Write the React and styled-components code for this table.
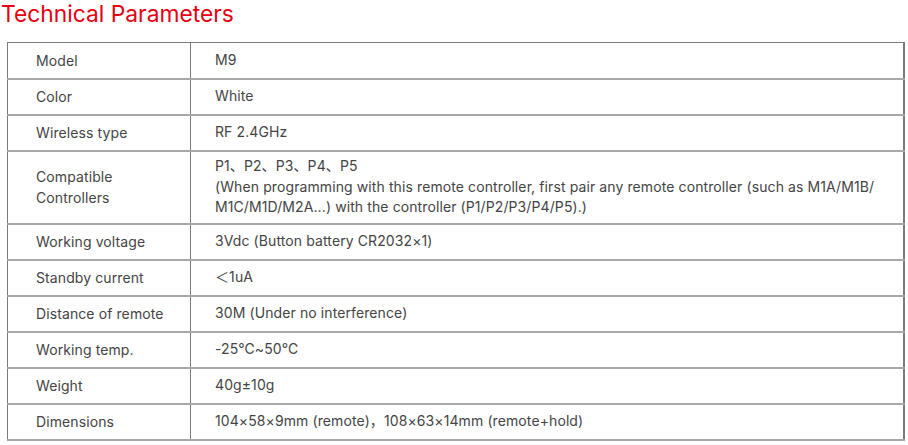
import React from 'react';
import styled, { createGlobalStyle } from 'styled-components';

const GlobalStyle = createGlobalStyle`
  html, body {
    margin: 0;
    padding: 0;
    background: #ffffff;
  }
  body {
    font-family: Inter, 'Noto Sans', 'Noto Sans CJK SC', sans-serif;
  }
`;

const params = [
  { label: 'Model', value: ['M9'] },
  { label: 'Color', value: ['White'] },
  { label: 'Wireless type', value: ['RF 2.4GHz'] },
  {
    label: 'Compatible\nControllers',
    value: [
      'P1、P2、P3、P4、P5',
      '(When programming with this remote controller, first pair any remote controller (such as M1A/M1B/',
      'M1C/M1D/M2A...) with the controller (P1/P2/P3/P4/P5).)',
    ],
  },
  { label: 'Working voltage', value: ['3Vdc (Button battery CR2032×1)'] },
  { label: 'Standby current', value: ['＜1uA'] },
  { label: 'Distance of remote', value: ['30M (Under no interference)'] },
  { label: 'Working temp.', value: ['-25℃~50℃'] },
  { label: 'Weight', value: ['40g±10g'] },
  { label: 'Dimensions', value: ['104×58×9mm (remote)，108×63×14mm (remote+hold)'] },
];

const Page = styled.div`
  width: 908px;
  height: 445px;
  overflow: hidden;
`;

const Title = styled.h2`
  margin: 0;
  padding: 1px 0 0 1px;
  height: 41px;
  font-size: 22.8px;
  font-weight: 400;
  line-height: 25px;
  color: #e60012;
`;

const Table = styled.table`
  margin-left: 7px;
  width: 898px;
  border-collapse: collapse;
  border: 1px solid #7a7a7a;
  border-right-width: 2px;
  table-layout: fixed;
`;

const Row = styled.tr`
  border-bottom: 2px solid #a8a8a8;
`;

const LabelCell = styled.td`
  width: 183px;
  height: ${p => (p.$tall ? 73 : 36)}px;
  padding: 0 0 0 28px;
  box-sizing: border-box;
  border-right: 1px solid #7a7a7a;
  font-size: 14px;
  line-height: 21px;
  letter-spacing: 0.1px;
  color: #444;
  white-space: pre-line;
  vertical-align: middle;
`;

const ValueCell = styled.td`
  padding: 0 0 0 24px;
  font-size: 14px;
  line-height: 20.5px;
  letter-spacing: 0.1px;
  color: #444;
  vertical-align: middle;
`;

const Line = styled.div`
  white-space: nowrap;
`;

export default function App() {
  return (
    <Page>
      <GlobalStyle />
      <Title>Technical Parameters</Title>
      <Table>
        <tbody>
          {params.map(p => (
            <Row key={p.label}>
              <LabelCell $tall={p.value.length > 1}>{p.label}</LabelCell>
              <ValueCell>
                {p.value.map(v => (
                  <Line key={v}>{v}</Line>
                ))}
              </ValueCell>
            </Row>
          ))}
        </tbody>
      </Table>
    </Page>
  );
}
